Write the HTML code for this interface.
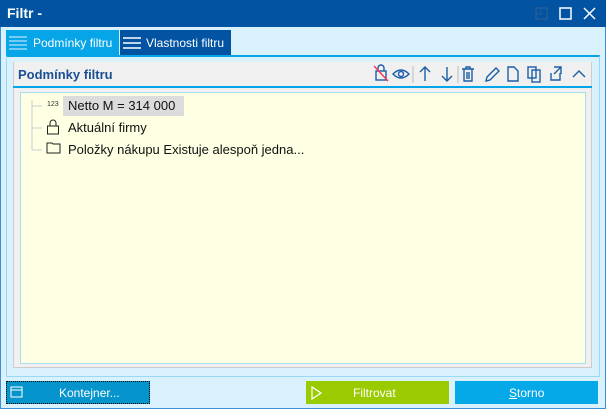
<html><head><style>
body{margin:0;width:606px;height:409px;overflow:hidden;font-family:"Liberation Sans",sans-serif;background:#d8f1fc;position:relative}
.a{position:absolute}
.ic{stroke:#1a5ea8;fill:none;stroke-width:1.4}
</style></head><body>
<div class="a" style="left:0;top:0;width:606px;height:409px;border:1px solid #3d8fd6;box-sizing:border-box"></div>
<div class="a" style="left:0;top:0;width:606px;height:27px;background:#0253a2"></div>
<div class="a" style="left:7px;top:5px;color:#fff;font-weight:bold;font-size:14px">Filtr -</div>
<svg class="a" style="left:530px;top:5px" width="70" height="18">
<rect x="6" y="3" width="11" height="11" fill="none" stroke="#2f5f96" stroke-width="1.2"/><path d="M6 9h5V3" stroke="#2f5f96" fill="none"/>
<rect x="30" y="3" width="11" height="11" fill="none" stroke="#fff" stroke-width="1.5"/>
<path d="M54 3l11 11M65 3L54 14" stroke="#fff" stroke-width="1.5"/></svg>
<div class="a" style="left:6px;top:30px;width:113px;height:25px;background:#06a5e8"></div>
<div class="a" style="left:120px;top:30px;width:111px;height:25px;background:#0253a2"></div>
<svg class="a" style="left:9px;top:35px" width="20" height="16"><path d="M0 2h18M0 6h18M0 10h18M0 14h18" stroke="#9ad8f5" stroke-width="1.5"/></svg>
<svg class="a" style="left:123px;top:36px" width="20" height="16"><path d="M0 2h18M0 7h18M0 12h18" stroke="#fff" stroke-width="1.5"/></svg>
<div class="a" style="left:33px;top:36px;color:#fff;font-size:12px">Podmínky filtru</div>
<div class="a" style="left:146px;top:36px;color:#fff;font-size:12px">Vlastnosti filtru</div>
<div class="a" style="left:6px;top:55px;width:594px;height:322px;border:1px solid #9ad8f3;border-top:2px solid #06a5e8;box-sizing:border-box"></div>
<div class="a" style="left:13px;top:62px;width:579px;height:306px;background:#f0f0f0;border:1px solid #ccc;border-top:none;box-sizing:border-box"></div>
<div class="a" style="left:18px;top:67px;color:#1b4f94;font-weight:bold;font-size:13px">Podmínky filtru</div>
<div class="a" style="left:13px;top:86px;width:579px;height:2px;background:#06a5e8"></div>
<div class="a" style="left:20px;top:92px;width:566px;height:272px;background:#ffffe3;border:1px solid #a8dcf2;box-sizing:border-box"></div>
<svg class="a" style="left:368px;top:63px" width="224" height="22">
<g class="ic"><rect x="8" y="8" width="10" height="9"/><path d="M10 8V5a3 3 0 0 1 6 0v3"/></g><path d="M6 3l14 15" stroke="#f35" stroke-width="1.4"/>
<g class="ic"><path d="M25 11q8-8 16 0q-8 8-16 0z"/><circle cx="33" cy="11" r="2.5"/></g>
<path d="M45 3v17" stroke="#bbb"/>
<g class="ic"><path d="M57 18V4M52 9l5-5 5 5M79 4v14M74 13l5 5 5-5"/></g>
<path d="M90 3v17" stroke="#bbb"/>
<g class="ic"><path d="M94 6h12M98 6V4h4v2M96 6v12h8V6M99 9v7M101 9v7"/><path d="M118 18l1-4 9-9 3 3-9 9z"/><path d="M140 4h6l4 4v10h-10z"/><rect x="160" y="4" width="8" height="11"/><rect x="164" y="7" width="8" height="12"/><path d="M183 10v7h9v-7M186 4h7v7M193 4l-7 7"/><path d="M205 14l6-6 6 6"/></g>
</svg>
<svg class="a" style="left:28px;top:100px" width="40" height="60"><path d="M4 0v50M4 6h10M4 28h10M4 50h10" stroke="#ccc"/></svg>
<div class="a" style="left:47px;top:101px;font-size:7px;color:#333">123</div>
<div class="a" style="left:63px;top:96px;width:121px;height:20px;background:#dcdcdc"></div>
<div class="a" style="left:68px;top:98px;font-size:13px;color:#111">Netto M = 314 000</div>
<svg class="a" style="left:46px;top:119px" width="14" height="16"><rect x="1.5" y="7" width="11" height="8" fill="none" stroke="#222"/><path d="M4 7V4a3 3 0 0 1 6 0v3" fill="none" stroke="#222"/></svg>
<div class="a" style="left:68px;top:120px;font-size:13px;color:#111">Aktuální firmy</div>
<svg class="a" style="left:46px;top:141px" width="16" height="14"><path d="M1 2h5l1 1h7v9H1z" fill="none" stroke="#222"/></svg>
<div class="a" style="left:68px;top:142px;font-size:13px;color:#111">Položky nákupu Existuje alespoň jedna...</div>
<div class="a" style="left:6px;top:381px;width:144px;height:23px;background:#0694cc;border:1px dotted #000;box-sizing:border-box"></div>
<svg class="a" style="left:10px;top:385px" width="14" height="14"><rect x="1" y="2" width="11" height="10" fill="none" stroke="#fff"/><path d="M1 5h11" stroke="#fff"/></svg>
<div class="a" style="left:59px;top:386px;color:#fff;font-size:12px">Kontejner...</div>
<div class="a" style="left:306px;top:381px;width:143px;height:23px;background:#9acb00"></div>
<svg class="a" style="left:310px;top:385px" width="14" height="16"><path d="M2 2l9 6-9 6z" fill="none" stroke="#fff" stroke-width="1.2"/></svg>
<div class="a" style="left:353px;top:386px;color:#fff;font-size:12px">Filtrovat</div>
<div class="a" style="left:455px;top:381px;width:143px;height:23px;background:#06a9e8"></div>
<div class="a" style="left:509px;top:386px;color:#fff;font-size:12px"><u>S</u>torno</div>
</body></html>
